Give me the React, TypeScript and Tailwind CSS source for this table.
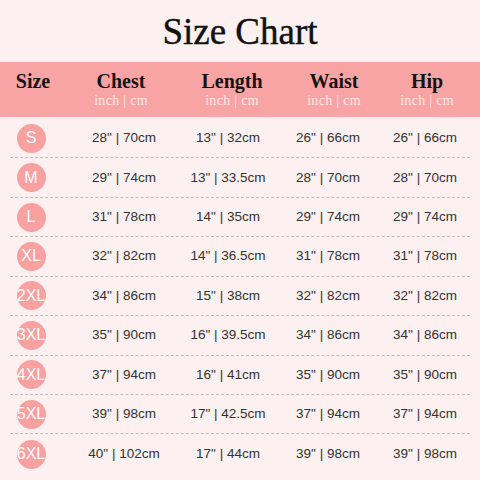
const rows = [
  { size: "S", chest: "28\" | 70cm", length: "13\" | 32cm", waist: "26\" | 66cm", hip: "26\" | 66cm" },
  { size: "M", chest: "29\" | 74cm", length: "13\" | 33.5cm", waist: "28\" | 70cm", hip: "28\" | 70cm" },
  { size: "L", chest: "31\" | 78cm", length: "14\" | 35cm", waist: "29\" | 74cm", hip: "29\" | 74cm" },
  { size: "XL", chest: "32\" | 82cm", length: "14\" | 36.5cm", waist: "31\" | 78cm", hip: "31\" | 78cm" },
  { size: "2XL", chest: "34\" | 86cm", length: "15\" | 38cm", waist: "32\" | 82cm", hip: "32\" | 82cm" },
  { size: "3XL", chest: "35\" | 90cm", length: "16\" | 39.5cm", waist: "34\" | 86cm", hip: "34\" | 86cm" },
  { size: "4XL", chest: "37\" | 94cm", length: "16\" | 41cm", waist: "35\" | 90cm", hip: "35\" | 90cm" },
  { size: "5XL", chest: "39\" | 98cm", length: "17\" | 42.5cm", waist: "37\" | 94cm", hip: "37\" | 94cm" },
  { size: "6XL", chest: "40\" | 102cm", length: "17\" | 44cm", waist: "39\" | 98cm", hip: "39\" | 98cm" },
];

const HeaderCell = ({ label }: { label: string }) => (
  <div className="flex flex-col items-center">
    <p className="text-[20px] leading-[24px] font-bold text-[#141414]">{label}</p>
    <p className="text-[14px] leading-[16px] tracking-[0.3px] text-[#fde8e8]">inch | cm</p>
  </div>
);

const Cell = ({ value }: { value: string }) => (
  <div className="flex justify-center items-center whitespace-nowrap">{value}</div>
);

export default function App() {
  return (
    <div className="w-[480px] h-[480px] overflow-hidden bg-[#fdf0f0] font-['Liberation_Serif',serif]">
      <div className="h-[62px] flex items-center justify-center pt-[2px]">
        <h1 className="text-[37px] text-[#111] [-webkit-text-stroke:0.4px_#111]">Size Chart</h1>
      </div>

      <div className="h-[55px] bg-[#f9a4a4] grid grid-cols-[66px_110px_112px_92px_94px] pt-[7px]">
        <div className="flex justify-center">
          <p className="text-[20px] leading-[24px] font-bold text-[#141414]">Size</p>
        </div>
        <HeaderCell label="Chest" />
        <HeaderCell label="Length" />
        <HeaderCell label="Waist" />
        <HeaderCell label="Hip" />
      </div>

      <div className="mt-[2px] mx-[10px] font-['Liberation_Sans',Arial,sans-serif] text-[13.5px] text-[#333]">
        {rows.map((r) => (
          <div
            key={r.size}
            className="h-[39.43px] grid grid-cols-[42px_144px_64px_136px_58px] border-b border-dashed border-[#c4bcbc] last:border-b-0"
          >
            <div className="flex justify-center items-center">
              <div className="w-[29px] h-[29px] rounded-full bg-[#f9a1a1] flex items-center justify-center text-white text-[16px] whitespace-nowrap">
                {r.size}
              </div>
            </div>
            <Cell value={r.chest} />
            <Cell value={r.length} />
            <Cell value={r.waist} />
            <Cell value={r.hip} />
          </div>
        ))}
      </div>
    </div>
  );
}
